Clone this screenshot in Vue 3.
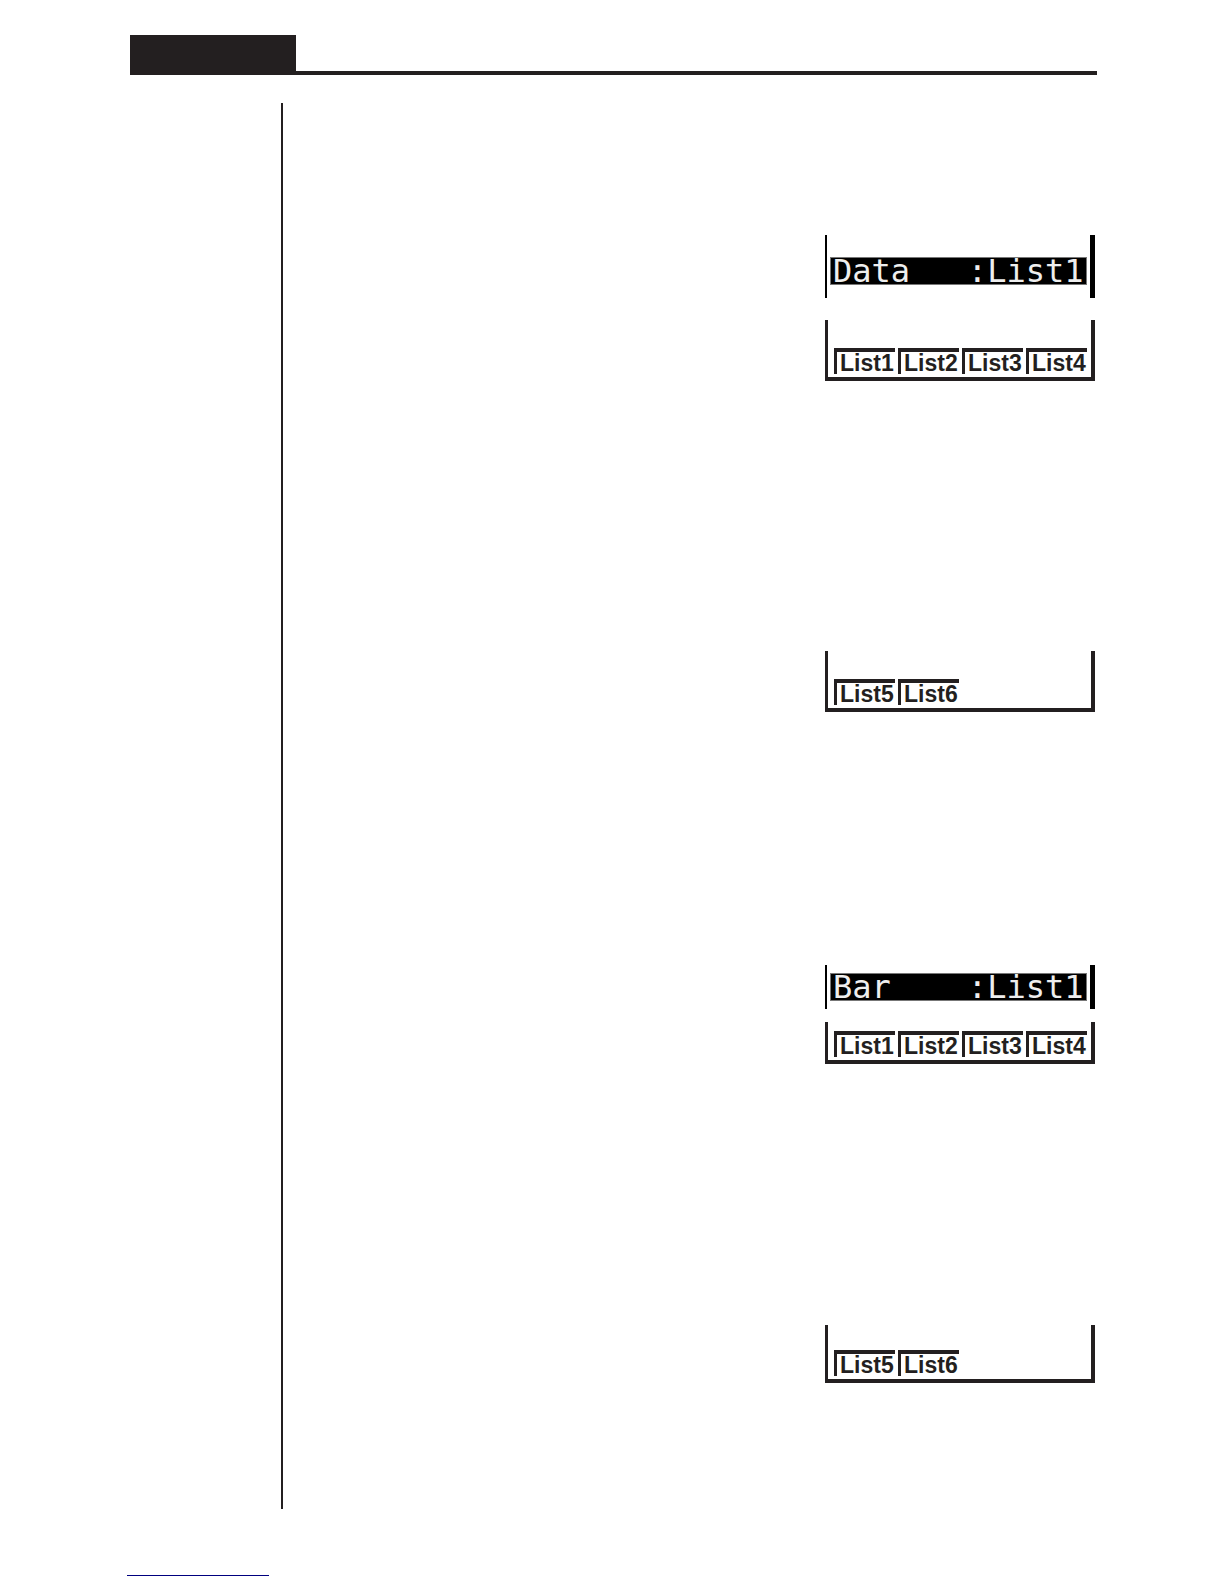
<script setup>
const sections = [
  {
    kind: 'data',
    setting: 'Data   :List1',
    menus: [['List1', 'List2', 'List3', 'List4'], ['List5', 'List6']],
  },
  {
    kind: 'bar',
    setting: 'Bar    :List1',
    menus: [['List1', 'List2', 'List3', 'List4'], ['List5', 'List6']],
  },
]
</script>

<template>
  <div class="page">
    <header class="header"><div class="chapter"></div></header>
    <main class="body">
      <section v-for="s in sections" :key="s.kind" class="section" :class="s.kind">
        <div class="setting">
          <pre class="selected">{{ s.setting }}</pre>
        </div>
        <div v-for="(menu, i) in s.menus" :key="i" class="menu" :class="{ more: i > 0 }">
          <button v-for="label in menu" :key="label" type="button" class="key">{{ label }}</button>
        </div>
      </section>
    </main>
    <hr class="footnote" />
  </div>
</template>

<style>
body {
  margin: 0;
  background: #fff;
}
</style>

<style scoped>
.page {
  padding: 35px 127px 8px 130px;
  color: #231f20;
}
.header {
  border-bottom: 4px solid #231f20;
}
.chapter {
  width: 166px;
  height: 36px;
  background: #231f20;
}
.body {
  margin: 28px 0 0 151px;
  padding: 132px 2px 126px 0;
  border-left: 2px solid #231f20;
}
.section {
  display: flex;
  flex-direction: column;
  align-items: flex-end;
}
.section + .section {
  margin-top: 253px;
}
.setting,
.menu {
  box-sizing: border-box;
  width: 270px;
  border: solid #231f20;
}
.setting {
  padding: 22px 3px 13px;
  border-width: 0 5px 0 2px;
  border-color: #000;
}
.bar .setting {
  padding: 8px 3px;
}
.selected {
  box-sizing: border-box;
  height: 28px;
  margin: 0;
  padding-left: 2px;
  border: 1px solid #777;
  background: #000;
  color: #eee;
  font: 32px/26px "DejaVu Sans Mono", monospace;
}
.menu {
  display: flex;
  gap: 3px;
  margin-top: 22px;
  padding: 28px 3px 3px 6px;
  border-width: 0 4px 4px 3px;
}
.menu.more {
  margin-top: 270px;
}
.bar .menu {
  margin-top: 13px;
  padding-top: 9px;
}
.bar .menu.more {
  margin-top: 261px;
  padding-top: 25px;
}
.key {
  box-sizing: border-box;
  width: 61px;
  height: 26px;
  padding: 0 0 0 3px;
  border: solid #231f20;
  border-width: 4px 0 0 3px;
  border-radius: 0;
  background: transparent;
  color: #231f20;
  font: bold 23px/22px "Liberation Sans", Arial, sans-serif;
  text-align: left;
}
.footnote {
  width: 142px;
  height: 1px;
  margin: 66px 0 0 -3px;
  border: 0;
  background: #00007f;
}
</style>
